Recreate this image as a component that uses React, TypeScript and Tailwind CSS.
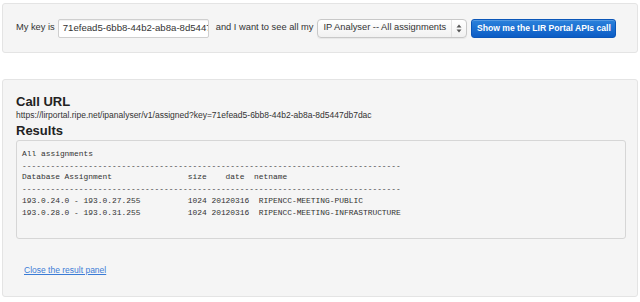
import React from 'react';

const sans = { fontFamily: '"Liberation Sans", Arial, sans-serif' };
const mono = { fontFamily: '"Liberation Mono", "DejaVu Sans Mono", monospace' };

const RESULT = `All assignments
--------------------------------------------------------------------------------
Database Assignment                size    date  netname
--------------------------------------------------------------------------------
193.0.24.0 - 193.0.27.255          1024 20120316  RIPENCC-MEETING-PUBLIC
193.0.28.0 - 193.0.31.255          1024 20120316  RIPENCC-MEETING-INFRASTRUCTURE`;

function FakeSelect() {
  return (
    <div className="ml-[4px] flex h-[19px] w-[150px] shrink-0 items-center rounded-[4px] border border-[#c8c8c8] bg-gradient-to-b from-white to-[#f1f1f1] pl-[5px] pr-[4px] shadow-[0_1px_1px_rgba(0,0,0,0.06)]">
      <span className="flex-1 overflow-hidden whitespace-nowrap text-[9.3px] text-[#333]">IP Analyser -- All assignments</span>
      <div className="flex h-full items-center border-l border-[#e2e2e2] pl-[4px]">
        {/* petites flèches haut/bas */}
        <svg width="6" height="9" viewBox="0 0 6 9">
          <path d="M3 0.5 L5.5 3.5 H0.5 Z" fill="#555" />
          <path d="M3 8.5 L5.5 5.5 H0.5 Z" fill="#555" />
        </svg>
      </div>
    </div>
  );
}

export default function App() {
  return (
    <div className="min-h-[302px] bg-white pt-[3px]" style={sans}>
      {/* Formulaire */}
      <div className="mx-[2px] flex h-[50px] items-center rounded-[3px] border border-[#e4e4e4] bg-[#f5f5f5] pl-[13px]">
        <span className="shrink-0 whitespace-nowrap text-[9.3px] text-[#333]">My key is</span>
        <div className="ml-[3px] flex h-[19px] w-[151px] shrink-0 items-center overflow-hidden rounded-[2px] border border-[#cfcfcf] bg-white pl-[4px] shadow-[inset_0_1px_1px_rgba(0,0,0,0.06)]">
          <span className="whitespace-nowrap text-[9.6px] text-[#333]">71efead5-6bb8-44b2-ab8a-8d5447db7dac</span>
        </div>
        <span className="ml-[7px] shrink-0 whitespace-nowrap text-[9.3px] text-[#333]">and I want to see all my</span>
        <FakeSelect />
        <button className="ml-[4px] flex h-[19px] w-[145px] shrink-0 items-center justify-center whitespace-nowrap rounded-[3px] border border-[#0b56b8] bg-gradient-to-b from-[#2b82dc] to-[#0b5cc5] text-[8.6px] font-bold text-white shadow-[inset_0_1px_0_rgba(255,255,255,0.2)]">
          Show me the LIR Portal APIs call
        </button>
      </div>

      {/* Panneau de résultats */}
      <div className="mx-[2px] mt-[26px] h-[218px] rounded-[3px] border border-[#e4e4e4] bg-[#f5f5f5] pl-[13px] pr-[11px] pt-[14px]">
        <h2 className="text-[13px] font-bold leading-[16px] text-[#222]">Call URL</h2>
        <p className="text-[8.5px] leading-[10px] text-[#333]">
          https://lirportal.ripe.net/ipanalyser/v1/assigned?key=71efead5-6bb8-44b2-ab8a-8d5447db7dac
        </p>
        <h2 className="mt-[3px] text-[13px] font-bold leading-[16px] text-[#222]">Results</h2>
        <pre
          className="mt-[1px] h-[99px] overflow-hidden rounded-[3px] border border-[#d6d6d6] bg-[#f5f5f5] pl-[5px] pt-[7px] text-[7.9px] leading-[11.7px] text-[#333]"
          style={mono}
        >
          {RESULT}
        </pre>
        <a href="#" className="ml-[8px] mt-[25px] inline-block text-[8.5px] leading-[12px] text-[#3b7cd6] underline">
          Close the result panel
        </a>
      </div>
    </div>
  );
}
